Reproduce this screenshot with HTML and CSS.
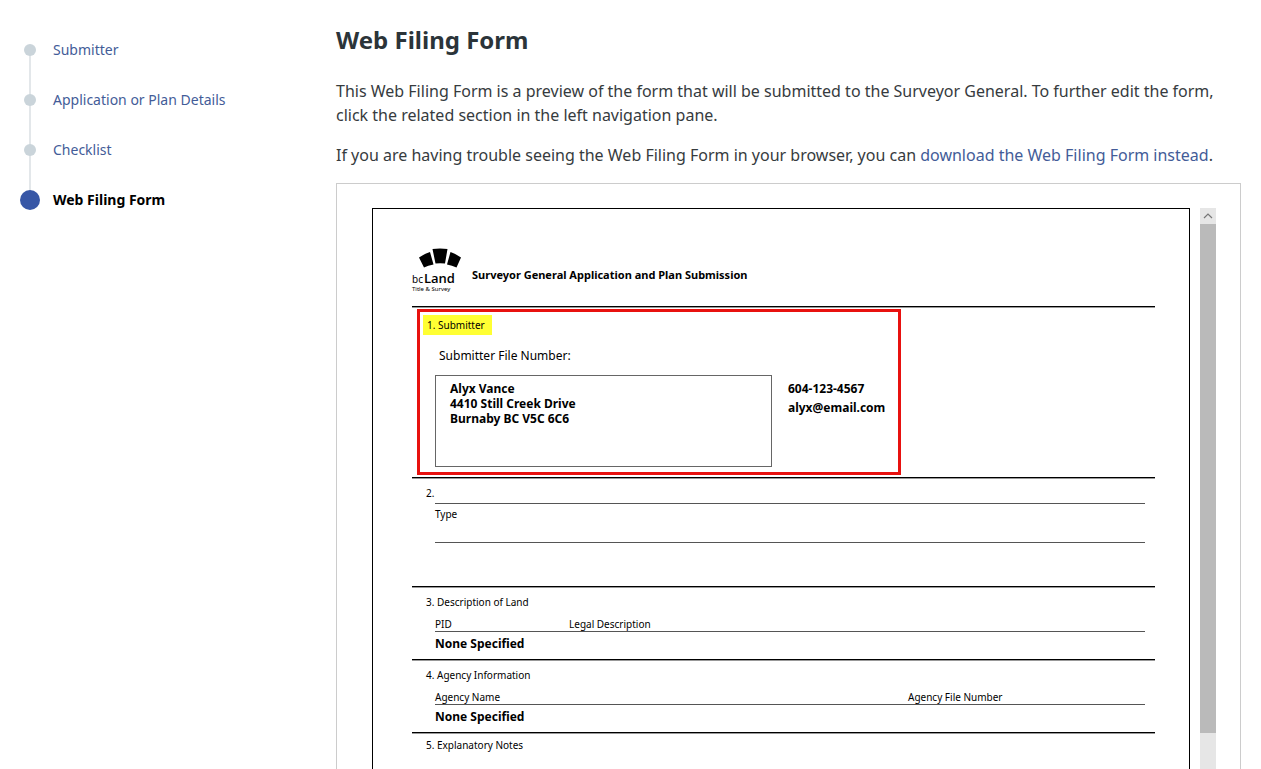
FILE: index.html
```html
<!DOCTYPE html>
<html lang="en">
<head>
  <meta charset="UTF-8">
  <title>Web Filing Form</title>
  <meta name="viewport" content="width=device-width, initial-scale=1.0">
  <link rel="stylesheet" href="styles.css">
</head>
<body>

  <div class="layout">
    <nav class="steps">
      <ol>
        <li><a href="#submitter">Submitter</a></li>
        <li><a href="#details">Application or Plan Details</a></li>
        <li><a href="#checklist">Checklist</a></li>
        <li class="current"><a href="#form" aria-current="step">Web Filing Form</a></li>
      </ol>
    </nav>

    <main class="content">
      <h1>Web Filing Form</h1>
      <p>This Web Filing Form is a preview of the form that will be submitted to the Surveyor General. To further edit the form, click the related section in the left navigation pane.</p>
      <p>If you are having trouble seeing the Web Filing Form in your browser, you can <a href="#download">download the Web Filing Form instead</a>.</p>

      <div class="viewer">
        <article class="paper">
          <header class="paper-header">
            <svg class="logo" viewBox="0 0 44 46" role="img" aria-label="bc Land Title &amp; Survey">
              <path d="M7 9.5 Q12 6 18 4 L21.5 16.5 Q16 17.5 12 19.5 Z"/>
              <path d="M20.5 1 Q28 0 35.5 1 L33 15.5 Q28 15 23.5 15.5 Z"/>
              <path d="M38.5 4 Q44 6 49 9.5 L44.5 19.5 Q40 17.5 35 16.5 Z"/>
              <text class="logo-bc" x="0" y="35">bc</text>
              <text class="logo-land" x="12" y="35">Land</text>
              <text class="logo-sub" x="0" y="43">Title &amp; Survey</text>
            </svg>
            <h2>Surveyor General Application and Plan Submission</h2>
          </header>

          <section class="submitter">
            <div class="callout">
              <h3><mark>1. Submitter</mark></h3>
              <p class="file-number">Submitter File Number:</p>
              <div class="party">
                <address>Alyx Vance<br>4410 Still Creek Drive<br>Burnaby BC V5C 6C6</address>
                <div class="contact">
                  <div>604-123-4567</div>
                  <div>alyx@email.com</div>
                </div>
              </div>
            </div>
          </section>

          <section class="type">
            <h3>2.</h3>
            <div class="type-row">Type</div>
          </section>

          <section>
            <h3>3. Description of Land</h3>
            <div class="columns land">
              <span>PID</span>
              <span>Legal Description</span>
            </div>
            <p class="value">None Specified</p>
          </section>

          <section>
            <h3>4. Agency Information</h3>
            <div class="columns agency">
              <span>Agency Name</span>
              <span>Agency File Number</span>
            </div>
            <p class="value">None Specified</p>
          </section>

          <section class="notes">
            <h3>5. Explanatory Notes</h3>
          </section>
        </article>

        <div class="scrollbar">
          <button type="button" aria-label="Scroll up">
            <svg viewBox="0 0 16 16"><path d="M4 10 L8 6 L12 10"/></svg>
          </button>
          <div class="thumb"></div>
          <div class="track"></div>
        </div>
      </div>
    </main>
  </div>

</body>
</html>
```
FILE: styles.css
```css
* {
  box-sizing: border-box;
}

body {
  margin: 0;
  background-color: #fff;
  color: #363b3e;
  font-family: "Noto Sans", sans-serif;
  font-size: 16px;
  line-height: 24px;
}

h1, h2, h3, p, ol {
  margin: 0;
  padding: 0;
}

a {
  color: #435c98;
  text-decoration: none;
}

.layout {
  display: flex;
  height: 100vh;
  overflow: hidden;
}

/* step navigation */
.steps {
  flex: 0 0 336px;
  padding: 25px 20px;
  font-size: 14px;
}

.steps ol {
  list-style: none;
}

.steps li {
  position: relative;
  display: flex;
  align-items: center;
  gap: 13px;
  height: 50px;
}

.steps li::before {
  content: "";
  width: 12px;
  height: 12px;
  margin: 0 4px;
  border-radius: 50%;
  background-color: #cad4da;
  z-index: 1;
}

.steps li:not(:last-child)::after {
  content: "";
  position: absolute;
  left: 9px;
  top: 25px;
  width: 2px;
  height: 50px;
  background-color: #e3e7ea;
}

.steps .current::before {
  width: 20px;
  height: 20px;
  margin: 0;
  background-color: #3757a6;
}

.steps .current a {
  color: #000;
  font-weight: bold;
}

/* main column */
.content {
  flex: 1;
  display: flex;
  flex-direction: column;
  padding: 24px 20px 0 0;
}

.content h1 {
  margin-bottom: 23px;
  font-size: 24px;
  line-height: 32px;
  color: #2b3439;
}

.content > p {
  margin-bottom: 16px;
}

.viewer {
  flex: 1;
  display: flex;
  gap: 10px;
  min-height: 0;
  padding: 24px 24px 0 35px;
  border: 1px solid #ccc;
  border-bottom: 0;
}

/* form page */
.paper {
  flex: 1;
  padding: 0 34px 0 39px;
  border: 1px solid #000;
  border-bottom: 0;
  color: #000;
  font-size: 10px;
  line-height: 14px;
  overflow: hidden;
}

.paper-header {
  display: flex;
  gap: 16px;
  height: 97px;
  padding-top: 39px;
}

.paper-header h2 {
  padding-top: 17px;
  font-family: "Liberation Sans Narrow", "Noto Sans", sans-serif;
  font-size: 11px;
  line-height: 20px;
}

.logo {
  width: 44px;
  height: 46px;
  overflow: visible;
}

.logo-bc {
  font-size: 10px;
}

.logo-land {
  font-family: "Open Sans", sans-serif;
  font-size: 13px;
  font-weight: 600;
}

.logo-sub {
  font-size: 6px;
}

.paper section {
  height: 73px;
  padding: 7px 10px 0 14px;
  border-top: 1px solid #000;
  box-shadow: inset 0 1px #999;
}

.paper h3 {
  font-size: 10px;
  font-weight: normal;
  line-height: 16px;
}

.paper .submitter {
  height: 171px;
  padding: 2px 0 0 5px;
}

.callout {
  width: 484px;
  height: 166px;
  padding: 3px;
  border: 3px solid #e8110f;
}

.callout mark {
  display: inline-block;
  padding: 2px 7px 2px 4px;
  background-color: #ffff33;
  color: #000;
}

.file-number {
  margin: 11px 0 9px 16px;
  font-size: 12px;
  line-height: 20px;
}

.party {
  display: flex;
  gap: 16px;
  margin-left: 12px;
  font-size: 12px;
  font-weight: bold;
}

.party address {
  width: 337px;
  height: 92px;
  padding: 5px 14px;
  border: 1px solid #666;
  font-style: normal;
  line-height: 15px;
}

.contact {
  padding-top: 4px;
  line-height: 19px;
}

.paper .type {
  height: 109px;
}

.type-row {
  height: 40px;
  margin: 2px 0 0 9px;
  padding-top: 3px;
  border-top: 1px solid #555;
  border-bottom: 1px solid #555;
}

.columns {
  display: grid;
  margin: 7px 0 0 9px;
  border-bottom: 1px solid #555;
}

.land {
  grid-template-columns: 134px 1fr;
}

.agency {
  grid-template-columns: 473px 1fr;
}

.value {
  margin-left: 9px;
  padding-top: 2px;
  font-size: 12px;
  font-weight: bold;
  line-height: 20px;
}

.paper .notes {
  padding-top: 4px;
}

/* scrollbar beside the page */
.scrollbar {
  width: 16px;
  display: flex;
  flex-direction: column;
  background-color: #e6e6e6;
}

.scrollbar button {
  width: 16px;
  height: 16px;
  padding: 0;
  border: 0;
  background-color: #e6e6e6;
}

.scrollbar svg {
  display: block;
  fill: none;
  stroke: #777;
  stroke-width: 1.2;
}

.thumb {
  flex: 14;
  background-color: #bababa;
}

.track {
  flex: 1;
}
```
